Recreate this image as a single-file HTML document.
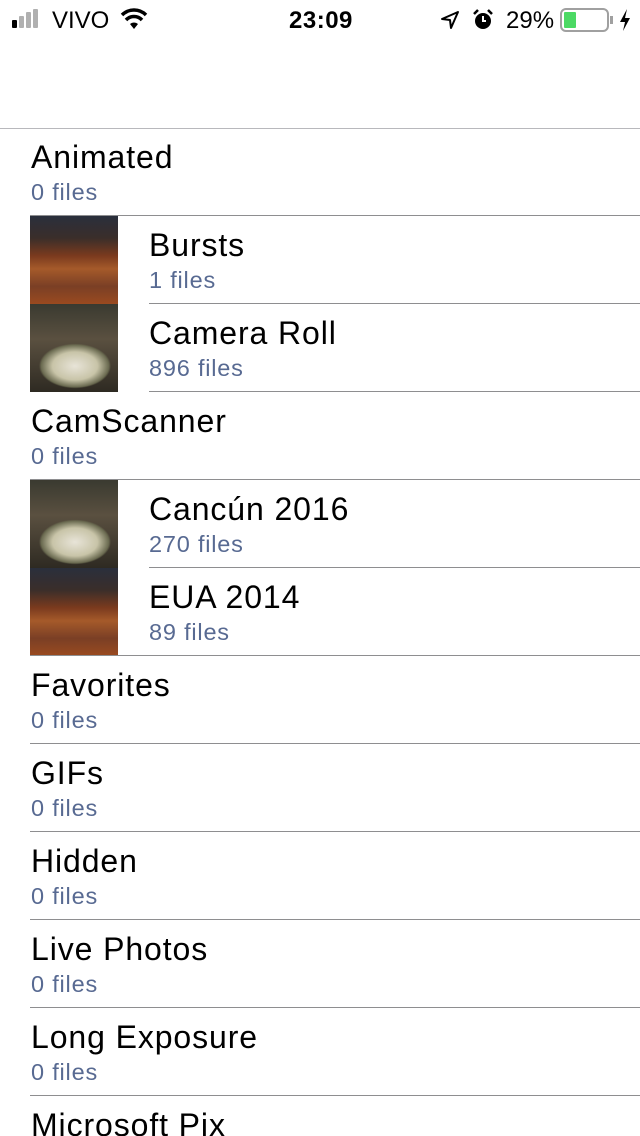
<!DOCTYPE html>
<html><head><meta charset="utf-8"><style>
*{margin:0;padding:0;box-sizing:border-box}
html,body{width:640px;height:1136px;overflow:hidden}
body{background:#fff;font-family:"Liberation Sans",sans-serif;position:relative}
.sb{position:absolute;top:0;left:0;width:640px;height:40px;font-size:24px;color:#000}
.hdr{position:absolute;top:128px;left:0;width:640px;height:1px;background:#b8b8bc}
.row{position:absolute;left:0;width:640px;height:88px}
.t{position:absolute;font-size:32px;letter-spacing:0.9px;color:#000;top:11px;white-space:nowrap}
.s{position:absolute;font-size:23.5px;letter-spacing:0.8px;color:#586a92;top:51px;white-space:nowrap}
.ln{position:absolute;bottom:0;right:0;height:1px;background:#8e8e90}
.th{position:absolute;left:30px;top:0;width:88px;height:88px;overflow:hidden}
.bar{background:linear-gradient(180deg,#2a2f3c 0%,#3a2e2a 25%,#7a3a1e 45%,#a55a2a 60%,#7a3f25 80%,#9a4a20 100%)}
.food{background:radial-gradient(ellipse 45px 28px at 45px 62px,#e8e4d8 0%,#c8c4a8 50%,#6a6a50 75%,transparent 80%),linear-gradient(180deg,#3a3a30,#5a5040 40%,#2e2a22)}
</style></head><body>
<div class="sb">
 <div style="position:absolute;left:12px;top:20px;width:5px;height:8px;background:#000;border-radius:1px"></div>
 <div style="position:absolute;left:19px;top:16px;width:5px;height:12px;background:#b0b0b0;border-radius:1px"></div>
 <div style="position:absolute;left:26px;top:12px;width:5px;height:16px;background:#b0b0b0;border-radius:1px"></div>
 <div style="position:absolute;left:33px;top:9px;width:5px;height:19px;background:#b0b0b0;border-radius:1px"></div>
 <div style="position:absolute;left:52px;top:7px">VIVO</div>
 <svg style="position:absolute;left:120px;top:8px" width="28" height="22" viewBox="0 0 28 22"><path d="M14 21 L10 16 A6 6 0 0 1 18 16Z" fill="#000"/><path d="M6 12 A11 11 0 0 1 22 12" stroke="#000" stroke-width="3.5" fill="none"/><path d="M2 7 A17 17 0 0 1 26 7" stroke="#000" stroke-width="3.5" fill="none"/></svg>
 <div style="position:absolute;left:289px;top:7px;font-weight:bold;letter-spacing:0.5px">23:09</div>
 <svg style="position:absolute;left:440px;top:10px" width="20" height="20" viewBox="0 0 20 20"><path d="M18 2 L2 9 L10 10 L11 18 Z" stroke="#000" stroke-width="2" fill="none" stroke-linejoin="round"/></svg>
 <svg style="position:absolute;left:472px;top:9px" width="22" height="22" viewBox="0 0 22 22"><circle cx="11" cy="12" r="8" fill="#000"/><path d="M11 7v5h3" stroke="#fff" stroke-width="2" fill="none"/><path d="M2 5 L6 1 M20 5 L16 1" stroke="#000" stroke-width="2.5"/></svg>
 <div style="position:absolute;left:506px;top:7px">29%</div>
 <div style="position:absolute;left:560px;top:8px;width:49px;height:24px;border:2px solid #a0a0a0;border-radius:6px"><div style="position:absolute;left:2px;top:2px;width:12px;height:16px;background:#4cd964;border-radius:1px"></div></div>
 <div style="position:absolute;left:610px;top:16px;width:3px;height:8px;background:#a0a0a0"></div>
 <svg style="position:absolute;left:619px;top:9px" width="12" height="22" viewBox="0 0 12 22"><path d="M8 0 L1 13 H6 L4 22 L11 9 H6Z" fill="#000"/></svg>
</div>
<div class="hdr"></div>

<div class="row" style="top:128px"><div class="t" style="left:31px">Animated</div><div class="s" style="left:31px">0 files</div><div class="ln" style="left:30px"></div></div>
<div class="row" style="top:216px"><div class="th bar"></div><div class="t" style="left:149px">Bursts</div><div class="s" style="left:149px">1 files</div><div class="ln" style="left:149px"></div></div>
<div class="row" style="top:304px"><div class="th food"></div><div class="t" style="left:149px">Camera Roll</div><div class="s" style="left:149px">896 files</div><div class="ln" style="left:149px"></div></div>
<div class="row" style="top:392px"><div class="t" style="left:31px">CamScanner</div><div class="s" style="left:31px">0 files</div><div class="ln" style="left:30px"></div></div>
<div class="row" style="top:480px"><div class="th food"></div><div class="t" style="left:149px">Cancún 2016</div><div class="s" style="left:149px">270 files</div><div class="ln" style="left:149px"></div></div>
<div class="row" style="top:568px"><div class="th bar"></div><div class="t" style="left:149px">EUA 2014</div><div class="s" style="left:149px">89 files</div><div class="ln" style="left:30px"></div></div>
<div class="row" style="top:656px"><div class="t" style="left:31px">Favorites</div><div class="s" style="left:31px">0 files</div><div class="ln" style="left:30px"></div></div>
<div class="row" style="top:744px"><div class="t" style="left:31px">GIFs</div><div class="s" style="left:31px">0 files</div><div class="ln" style="left:30px"></div></div>
<div class="row" style="top:832px"><div class="t" style="left:31px">Hidden</div><div class="s" style="left:31px">0 files</div><div class="ln" style="left:30px"></div></div>
<div class="row" style="top:920px"><div class="t" style="left:31px">Live Photos</div><div class="s" style="left:31px">0 files</div><div class="ln" style="left:30px"></div></div>
<div class="row" style="top:1008px"><div class="t" style="left:31px">Long Exposure</div><div class="s" style="left:31px">0 files</div><div class="ln" style="left:30px"></div></div>
<div class="row" style="top:1096px"><div class="t" style="left:31px">Microsoft Pix</div></div>
</body></html>
